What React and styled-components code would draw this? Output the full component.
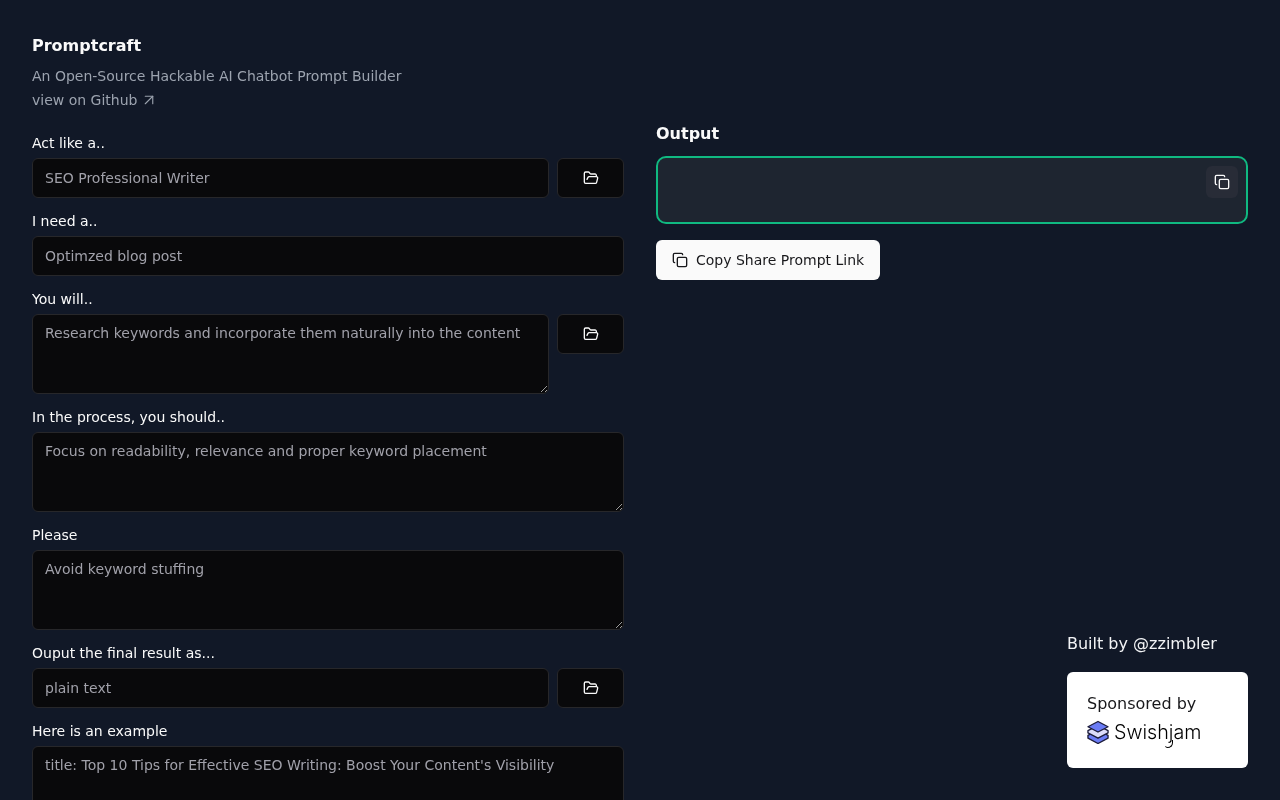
import React from "react";
import styled, { createGlobalStyle } from "styled-components";
import { ArrowUpRight, Copy, FolderOpen } from "lucide-react";

const GlobalStyle = createGlobalStyle`
  html, body {
    margin: 0;
    background: #111827;
  }
  body {
    font-family: "DejaVu Sans", sans-serif;
    color: #fafafa;
    -webkit-font-smoothing: antialiased;
  }
  * {
    box-sizing: border-box;
  }
`;

const Page = styled.main`
  min-height: 100vh;
  padding: 32px;
  will-change: opacity;
`;

const Header = styled.header`
  margin-bottom: 21px;
`;

const Title = styled.h1`
  margin: 0 0 4px;
  font-size: 16px;
  line-height: 28px;
  font-weight: 700;
  color: #fafafa;
`;

const Subtitle = styled.p`
  margin: 0;
  font-size: 14px;
  line-height: 24px;
  color: #9ca3af;
`;

const GithubLink = styled.a`
  display: flex;
  align-items: center;
  gap: 3px;
  font-size: 14px;
  line-height: 24px;
  color: #9ca3af;
  text-decoration: none;
`;

const Columns = styled.div`
  display: grid;
  grid-template-columns: 1fr 1fr;
  gap: 32px;
`;

const Form = styled.form`
  display: flex;
  flex-direction: column;
  gap: 13px;
`;

const Field = styled.div`
  display: flex;
  flex-direction: column;
  gap: 5px;
`;

const Label = styled.label`
  font-size: 14px;
  line-height: 20px;
  font-weight: 500;
  color: #fafafa;
`;

const Row = styled.div`
  display: flex;
  align-items: flex-start;
  gap: 8px;
`;

const Input = styled.input`
  flex: 1;
  min-width: 0;
  height: 40px;
  padding: 8px 12px;
  font: 14px/20px "DejaVu Sans", sans-serif;
  color: #fafafa;
  background: #09090b;
  border: 1px solid #27272a;
  border-radius: 6px;
  outline: none;

  &::placeholder {
    color: #a1a1aa;
    opacity: 1;
  }
`;

const TextArea = styled.textarea`
  flex: 1;
  min-width: 0;
  display: block;
  height: 80px;
  padding: 8px 12px;
  font: 14px/20px "DejaVu Sans", sans-serif;
  color: #fafafa;
  background: #09090b;
  border: 1px solid #27272a;
  border-radius: 6px;
  outline: none;

  &::placeholder {
    color: #a1a1aa;
    opacity: 1;
  }
`;

const PresetButton = styled.button`
  flex: none;
  width: 67px;
  height: 40px;
  display: flex;
  align-items: center;
  justify-content: center;
  padding: 0;
  color: #fafafa;
  background: #09090b;
  border: 1px solid #27272a;
  border-radius: 6px;
`;

const OutputColumn = styled.section`
  display: flex;
  flex-direction: column;
  align-items: flex-start;
  padding-top: 90px;
`;

const OutputTitle = styled.h2`
  margin: 0 0 10px;
  font-size: 16px;
  line-height: 24px;
  font-weight: 700;
  color: #fafafa;
`;

const OutputBox = styled.div`
  position: relative;
  width: 100%;
  height: 68px;
  background: #1e2530;
  border: 2px solid #10b981;
  border-radius: 10px;
`;

const CopyIconButton = styled.button`
  position: absolute;
  top: 8px;
  right: 8px;
  width: 32px;
  height: 32px;
  display: flex;
  align-items: center;
  justify-content: center;
  padding: 0;
  color: #fafafa;
  background: #282c37;
  border: none;
  border-radius: 6px;
`;

const ShareButton = styled.button`
  display: flex;
  align-items: center;
  gap: 8px;
  height: 40px;
  margin-top: 16px;
  padding: 0 16px;
  font: 500 14px/20px "DejaVu Sans", sans-serif;
  color: #18181b;
  background: #fafafa;
  border: none;
  border-radius: 6px;
`;

const Credits = styled.aside`
  position: fixed;
  right: 32px;
  bottom: 32px;
  width: 181px;
`;

const BuiltBy = styled.p`
  margin: 0 0 16px;
  font-size: 16px;
  line-height: 24px;
  color: #f3f4f6;
`;

const SponsorCard = styled.div`
  height: 96px;
  padding: 20px;
  background: #ffffff;
  border-radius: 6px;
`;

const SponsorText = styled.p`
  margin: 0 0 4px;
  font-size: 16px;
  line-height: 24px;
  color: #18181b;
`;

const Brand = styled.div`
  display: flex;
  align-items: center;
  gap: 5px;
`;

const BrandName = styled.span`
  font-family: Inter, sans-serif;
  font-size: 19.7px;
  line-height: 24px;
  font-weight: 300;
  color: #000000;
`;

// the logo's j has a long tail that swings left
const BrandJ = styled.span`
  position: relative;
  display: inline-block;

  &::after {
    content: "";
    position: absolute;
    left: -4px;
    top: 20px;
    width: 7px;
    height: 7px;
    border-right: 1.2px solid #000000;
    border-bottom: 1.2px solid #000000;
    border-radius: 0 0 6px 3px;
  }
`;

const SwishjamLogo = () => (
  <svg width="22" height="24" viewBox="0 0 23 24" fill="none" stroke="#1c1c3a" strokeWidth="1.4" strokeLinejoin="round">
    <path d="M1 15.500 11.500 10 22 15.500v3L11.500 24 1 18.500z" fill="#6b7cf6" />
    <path d="M1 10.500 11.500 5 22 10.500v2.500L11.500 18.500 1 13z" fill="#dcdcfa" />
    <path d="M1 6.500 11.500 1 22 6.500 11.500 12z" fill="#6b7cf6" />
  </svg>
);

const fields = [
  { label: "Act like a..", placeholder: "SEO Professional Writer", preset: true },
  { label: "I need a..", placeholder: "Optimzed blog post" },
  { label: "You will..", placeholder: "Research keywords and incorporate them naturally into the content", multi: true, preset: true },
  { label: "In the process, you should..", placeholder: "Focus on readability, relevance and proper keyword placement", multi: true },
  { label: "Please", placeholder: "Avoid keyword stuffing", multi: true },
  { label: "Ouput the final result as...", placeholder: "plain text", preset: true },
  { label: "Here is an example", placeholder: "title: Top 10 Tips for Effective SEO Writing: Boost Your Content's Visibility", multi: true },
];

export default function App() {
  return (
    <Page>
      <GlobalStyle />
      <Columns>
        <div>
          <Header>
            <Title>Promptcraft</Title>
            <Subtitle>An Open-Source Hackable AI Chatbot Prompt Builder</Subtitle>
            <GithubLink href="#">
              view on Github <ArrowUpRight size={18} strokeWidth={1.5} />
            </GithubLink>
          </Header>
          <Form>
            {fields.map((field) => (
              <Field key={field.label}>
                <Label>{field.label}</Label>
                <Row>
                  {field.multi ? (
                    <TextArea placeholder={field.placeholder} />
                  ) : (
                    <Input placeholder={field.placeholder} />
                  )}
                  {field.preset && (
                    <PresetButton type="button">
                      <FolderOpen size={16} />
                    </PresetButton>
                  )}
                </Row>
              </Field>
            ))}
          </Form>
        </div>
        <OutputColumn>
          <OutputTitle>Output</OutputTitle>
          <OutputBox>
            <CopyIconButton type="button">
              <Copy size={16} />
            </CopyIconButton>
          </OutputBox>
          <ShareButton type="button">
            <Copy size={16} />
            Copy Share Prompt Link
          </ShareButton>
        </OutputColumn>
      </Columns>
      <Credits>
        <BuiltBy>Built by @zzimbler</BuiltBy>
        <SponsorCard>
          <SponsorText>Sponsored by</SponsorText>
          <Brand>
            <SwishjamLogo />
            <BrandName>Swish<BrandJ>j</BrandJ>am</BrandName>
          </Brand>
        </SponsorCard>
      </Credits>
    </Page>
  );
}
